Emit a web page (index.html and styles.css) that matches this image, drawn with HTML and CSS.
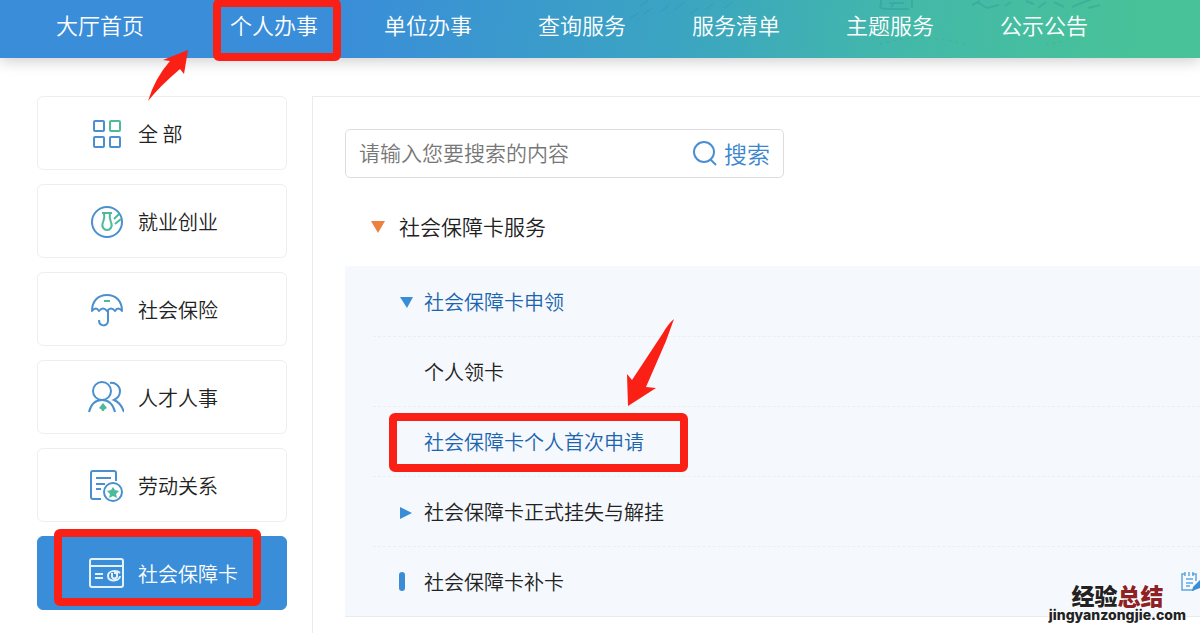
FILE: index.html
```html
<!DOCTYPE html>
<html lang="zh-CN">
  <head>
    <meta charset="utf-8" />
    <meta name="viewport" content="width=device-width, initial-scale=1" />
    <title>个人办事 - 社会保障卡</title>
    <link rel="stylesheet" href="styles.css">
  </head>

  <body>
    <header class="header">
      <svg class="header-art" viewBox="0 0 520 45" fill="none" stroke="#1f6f8f" aria-hidden="true">
        <path d="M10 18l8-5M24 14l8-6M40 12l9-7M54 10l10-8M20 6l8-5M70 14l8-6M86 9l7-5M104 8l9-6" />
        <path stroke-width="2" d="M261 0v5q-3 3 4 4h24M269 3h15M271 7l4-5M292 0v8" />
        <path stroke-width="2" d="M352 5l8-4M357 2l10 6 12-3M385 6l6-4M406 1l8 3M418 8l8-6M434 2l10 5M452 7l12-5 8-3M468 8l12-3" />
        <path d="M260 44q40-12 84 0t104-4" stroke-dasharray="2 5" />
      </svg>
      <nav class="nav">
        <a class="nav-item home" href="#">大厅首页</a>
        <a class="nav-item" href="#">个人办事</a>
        <a class="nav-item" href="#">单位办事</a>
        <a class="nav-item" href="#">查询服务</a>
        <a class="nav-item" href="#">服务清单</a>
        <a class="nav-item" href="#">主题服务</a>
        <a class="nav-item" href="#">公示公告</a>
      </nav>
    </header>

    <div class="content">
      <aside class="sidebar">
        <a class="card" href="#">
          <svg class="icon" viewBox="0 0 36 36" fill="none" stroke="#4a90cf" stroke-width="2">
            <rect x="6" y="6" width="10" height="10" rx="1" />
            <rect x="22" y="6" width="10" height="10" rx="1" stroke="#4dba9b" />
            <rect x="6" y="22" width="10" height="10" rx="1" />
            <rect x="22" y="22" width="10" height="10" rx="1" />
          </svg>
          全 部
        </a>
        <a class="card" href="#">
          <svg class="icon" viewBox="0 0 36 36" fill="none" stroke="#4a90cf" stroke-width="2">
            <circle cx="19" cy="19" r="15" />
            <path stroke="#4dba9b" d="M14 10h10M16 10c1 5 0 6-1 9-2 5 1 8 4 8s6-3 4-8c-1-3-2-4-1-9M26 16l5-5M27 21l6-5" />
          </svg>
          就业创业
        </a>
        <a class="card" href="#">
          <svg class="icon" viewBox="0 0 36 36" fill="none" stroke="#4a90cf" stroke-width="2">
            <path d="M4 20C4 10 10 4 19 4s15 6 15 16q-4-5-7 0-4-5-8 0-4-5-8 0-3-5-7 0zM20 19v11c0 6-9 6-9-1" stroke-linejoin="round" />
            <path stroke="#4dba9b" d="M16 10h6" />
          </svg>
          社会保险
        </a>
        <a class="card" href="#">
          <svg class="icon" viewBox="0 0 36 36" fill="none" stroke="#4a90cf" stroke-width="2">
            <circle cx="14" cy="12" r="9" />
            <path d="M1 33c2-8 6-12 13-12s11 4 13 12M22 4c5-1 10 3 10 8 0 4-2 7-6 9 5 2 8 6 10 12" />
            <path fill="#4dba9b" stroke="none" d="M15 24l4 5-3 2v1h-2v-1l-3-2z" />
          </svg>
          人才人事
        </a>
        <a class="card" href="#">
          <svg class="icon" viewBox="0 0 36 36" fill="none" stroke="#4a90cf" stroke-width="2">
            <path d="M28 14V6q0-2-2-2H5Q3 4 3 6v24q0 2 2 2h8M8 11h15M8 17h9M8 22h5" />
            <circle cx="25" cy="25" r="9" />
            <path fill="#4dba9b" stroke="none" d="M25 20l2 3 4 1-3 3 1 4-4-2-4 2 1-4-3-3 4-1z" />
          </svg>
          劳动关系
        </a>
        <a class="card active" href="#">
          <svg class="icon" viewBox="0 0 36 36" fill="none" stroke="#e4f1fb" stroke-width="2">
            <rect x="2" y="4" width="33" height="28" rx="2" />
            <path d="M2 11h33M7 19h8M7 23h8" />
            <path d="M32 18c-3-3-12-3-12 3 0 7 12 5 12 0M24 18v4q2 3 5 0v-4h-3" />
          </svg>
          社会保障卡
        </a>
      </aside>

      <main class="main">
        <form class="search" action="" method="get">
          <input class="search-input" type="text" name="q" placeholder="请输入您要搜索的内容" aria-label="请输入您要搜索的内容">
          <button class="search-button">
            <svg class="search-icon" viewBox="0 0 26 26" fill="none" stroke="#4a90cf" stroke-width="2">
              <circle cx="12" cy="12" r="10" />
              <path d="M18 19l6 6" />
            </svg>
            搜索
          </button>
        </form>

        <button class="group">
          <svg class="marker" viewBox="0 0 14 14"><path fill="#ec8140" d="M0 2h14L7 14z" /></svg>
          社会保障卡服务
        </button>

        <ul class="list">
          <li class="row">
            <button class="row-link open">
              <svg class="marker" viewBox="0 0 14 14"><path fill="#3a8dd5" d="M1 3h13L8 14z" /></svg>
              社会保障卡申领
            </button>
          </li>
          <li class="row">
            <a class="row-link" href="#"><span class="marker"></span>个人领卡</a>
          </li>
          <li class="row">
            <a class="row-link open" href="#"><span class="marker"></span>社会保障卡个人首次申请</a>
          </li>
          <li class="row">
            <button class="row-link">
              <svg class="marker" viewBox="0 0 14 14"><path fill="#3a8dd5" d="M1 2l12 6-12 6z" /></svg>
              社会保障卡正式挂失与解挂
            </button>
          </li>
          <li class="row">
            <a class="row-link" href="#">
              <svg class="marker" viewBox="0 0 14 20"><rect fill="#3a8dd5" width="6" height="19" rx="3" /></svg>
              社会保障卡补卡
            </a>
            <svg class="edit-icon" viewBox="0 0 19 22" fill="none" stroke="#62a6da" stroke-width="1.5">
              <path d="M4 3H1v16h12M11 3h4v7M4 1v4M8 1v4M12 1v4M5 8h7M5 12h7M5 15h4" />
              <path fill="#3a8dd5" stroke="none" d="M19 9l-7 7-1 4 8-3z" />
            </svg>
          </li>
        </ul>
      </main>
    </div>

    <!-- step marks -->
    <div class="mark mark-nav"></div>
    <div class="mark mark-side"></div>
    <div class="mark mark-list"></div>
    <svg class="arrow arrow-nav" viewBox="0 0 41 51" aria-hidden="true">
      <path fill="#fb2016" d="M40 0L15 10l7 1Q7 28 0 51 12 36 32 19l4 5z" />
    </svg>
    <svg class="arrow arrow-list" viewBox="0 0 47 87" aria-hidden="true">
      <path fill="#fb2016" d="M47 0Q41 5 36 14L5 61l-5-6 1 32 28-18-10-1L39 22z" />
    </svg>

    <div class="watermark">
      <div class="watermark-name">经验<span class="watermark-red">总结</span></div>
      <div class="watermark-site">jingyanzongjie.com</div>
    </div>
  </body>
</html>
```
FILE: styles.css
```css
* {
  box-sizing: border-box;
}
body {
  position: relative;
  display: flex;
  flex-direction: column;
  min-height: 100vh;
  margin: 0;
  overflow-x: hidden;
  background-color: #ffffff;
  color: #222222;
  font-family: "Noto Sans CJK SC", sans-serif;
  font-size: 20px;
  font-weight: 350;
}
a {
  color: inherit;
  text-decoration: none;
}
button {
  border: 0;
  padding: 0;
  background: none;
  color: inherit;
  font: inherit;
  text-align: left;
  cursor: pointer;
}

.header {
  position: relative;
  height: 58px;
  background: linear-gradient(98deg, #3a8dd9 28%, #3ba4c2 56%, #43b9a8 76%, #48c298 95%);
  box-shadow: 0 3px 14px rgba(0, 0, 0, 0.2);
}
.header-art {
  position: absolute;
  right: 60px;
  top: 0;
  width: 520px;
  height: 45px;
  opacity: 0.18;
}
.nav {
  position: relative;
  display: flex;
  padding-left: 23px;
}
.nav-item {
  padding: 0 33px;
  color: #ffffff;
  font-size: 22px;
  line-height: 48px;
  white-space: nowrap;
}
.home {
  margin-right: 20px;
}

.content {
  display: flex;
  flex: 1;
  gap: 25px;
  padding: 38px 0 0 37px;
}
.sidebar {
  display: flex;
  flex: none;
  flex-direction: column;
  gap: 14px;
  width: 250px;
}
.card {
  display: flex;
  align-items: center;
  gap: 14px;
  height: 74px;
  padding-left: 50px;
  border: 1px solid #eeeeee;
  border-radius: 6px;
}
.active {
  border-color: #3a8dd8;
  background: #3a8dd8;
  color: #ffffff;
}
.icon {
  width: 36px;
  height: 36px;
}

.main {
  flex: 1;
  padding: 32px 0 0 32px;
  border-top: 1px solid #ebebeb;
  border-left: 1px solid #ebebeb;
}
.search {
  display: flex;
  width: 439px;
  height: 49px;
  border: 1px solid #dddddd;
  border-radius: 5px;
}
.search-input {
  flex: 1;
  min-width: 0;
  padding: 0 0 3px 13px;
  border: 0;
  background: none;
  font: inherit;
  font-size: 21px;
}
.search-input::placeholder {
  color: #777777;
}
.search-button {
  display: flex;
  align-items: center;
  gap: 6px;
  padding: 0 13px 1px 0;
  color: #3a85cc;
  font-size: 23px;
}
.search-icon {
  width: 26px;
  height: 26px;
}

.marker {
  flex: none;
  width: 14px;
}
.group {
  display: flex;
  align-items: center;
  gap: 14px;
  height: 76px;
  margin-top: 10px;
  margin-bottom: 2px;
  padding-left: 26px;
  font-size: 21px;
}
.list {
  margin: 0;
  padding: 0 0 0 28px;
  border-bottom: 1px solid #e6ebf0;
  background: #f5f8fd;
  list-style: none;
}
.row {
  display: flex;
  align-items: center;
  justify-content: space-between;
  height: 70px;
}
.row + .row {
  border-top: 1px dashed #ebeff4;
}
.row-link {
  display: flex;
  align-items: center;
  gap: 11px;
  padding-left: 26px;
}
.open {
  color: #1c65ad;
}
.edit-icon {
  width: 19px;
  height: 22px;
}

.mark {
  position: absolute;
  border: 8px solid #fb2016;
  border-radius: 6px;
}
.mark-nav {
  left: 213px;
  top: -1px;
  width: 128px;
  height: 62px;
}
.mark-side {
  left: 54px;
  top: 529px;
  width: 207px;
  height: 77px;
}
.mark-list {
  left: 389px;
  top: 413px;
  width: 299px;
  height: 59px;
}
.arrow {
  position: absolute;
}
.arrow-nav {
  left: 148px;
  top: 50px;
  width: 41px;
  height: 51px;
}
.arrow-list {
  left: 627px;
  top: 319px;
  width: 47px;
  height: 87px;
}

.watermark {
  position: absolute;
  right: 14px;
  bottom: 10px;
  display: flex;
  flex-direction: column;
  align-items: center;
  color: #222222;
  text-shadow: 0 0 2px #ffffff, 0 0 2px #ffffff;
}
.watermark-name {
  font-size: 23px;
  font-weight: 900;
  line-height: 24px;
}
.watermark-red {
  color: #8f2023;
}
.watermark-site {
  font-family: Inter, sans-serif;
  font-size: 14px;
  font-weight: 800;
  line-height: 16px;
}
```
